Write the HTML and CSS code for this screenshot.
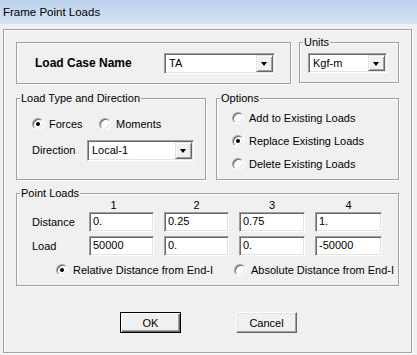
FILE: index.html
```html
<!DOCTYPE html>
<html>
<head>
    <meta charset="UTF-8">
    <title>Frame Point Loads</title>
    <link rel="stylesheet" href="styles.css">
</head>
<body>
    <div class="titlebar">Frame Point Loads</div>

    <div class="frame">
        <div class="row">
            <div class="group case-group">
                <span class="case-label">Load Case Name</span>
                <div class="combo combo-case">
                    <span class="combo-text">TA</span>
                    <span class="combo-btn"></span>
                </div>
            </div>
            <div class="group units-group">
                <span class="legend">Units</span>
                <div class="combo combo-units">
                    <span class="combo-text">Kgf-m</span>
                    <span class="combo-btn"></span>
                </div>
            </div>
        </div>

        <div class="row row-mid">
            <div class="group type-group">
                <span class="legend">Load Type and Direction</span>
                <div class="type-radios">
                    <label class="opt opt-forces"><span class="radio checked"></span>Forces</label>
                    <label class="opt"><span class="radio"></span>Moments</label>
                </div>
                <div class="dir-row">
                    <span class="dir-label">Direction</span>
                    <div class="combo combo-dir">
                        <span class="combo-text">Local-1</span>
                        <span class="combo-btn"></span>
                    </div>
                </div>
            </div>
            <div class="group options-group">
                <span class="legend">Options</span>
                <label class="opt opt-row"><span class="radio"></span>Add to Existing Loads</label>
                <label class="opt opt-row"><span class="radio checked"></span>Replace Existing Loads</label>
                <label class="opt opt-row"><span class="radio"></span>Delete Existing Loads</label>
            </div>
        </div>

        <div class="group points-group">
            <span class="legend">Point Loads</span>
            <div class="grid heads">
                <span></span>
                <span class="head head-first">1</span>
                <span class="head">2</span>
                <span class="head">3</span>
                <span class="head">4</span>
            </div>
            <div class="grid">
                <span class="row-label">Distance</span>
                <span class="field">0.</span>
                <span class="field">0.25</span>
                <span class="field">0.75</span>
                <span class="field">1.</span>
            </div>
            <div class="grid grid-load">
                <span class="row-label">Load</span>
                <span class="field">50000</span>
                <span class="field">0.</span>
                <span class="field">0.</span>
                <span class="field">-50000</span>
            </div>
            <div class="dist-row">
                <label class="opt opt-rel"><span class="radio checked"></span>Relative Distance from End-I</label>
                <label class="opt"><span class="radio"></span>Absolute Distance from End-I</label>
            </div>
        </div>

        <div class="buttons">
            <button class="btn btn-default">OK</button>
            <button class="btn">Cancel</button>
        </div>
    </div>
</body>
</html>
```

FILE: styles.css
```css
body {
    margin: 0;
    width: 417px;
    height: 355px;
    background: #f0f0f0;
    font-family: "Liberation Sans", Arial, sans-serif;
    font-size: 11px;
    color: #000;
    overflow: hidden;
}
.titlebar {
    height: 24px;
    line-height: 25px;
    padding-left: 3px;
    font-size: 11.5px;
    background: linear-gradient(#bcd2ec, #d3e2f3);
}
.frame {
    box-sizing: border-box;
    width: 409px;
    height: 324px;
    margin: 5px 0 0 3px;
    padding: 12px 0 0 12px;
    border: 1px solid #a0a0a0;
    box-shadow: inset 1px 1px #fff, 1px 1px #fff;
}
.row {
    display: flex;
    gap: 8px;
}
.row-mid {
    gap: 10px;
    margin-top: 14px;
}
.group {
    position: relative;
    box-sizing: border-box;
    border: 1px solid #a0a0a0;
    box-shadow: inset 1px 1px #fff, 1px 1px #fff;
}
.legend {
    position: absolute;
    top: -7px;
    left: 3px;
    padding: 0 1px;
    background: #f0f0f0;
    line-height: 13px;
}

/* load case */
.case-group {
    width: 275px;
    height: 42px;
    display: flex;
    align-items: center;
    padding-left: 18px;
}
.case-label {
    width: 129px;
    font-weight: bold;
    font-size: 12px;
}
.units-group {
    width: 100px;
    height: 41px;
    display: flex;
    align-items: center;
    padding-left: 8px;
}

/* combo boxes */
.combo {
    box-sizing: border-box;
    display: flex;
    height: 21px;
    padding: 1px;
    background: #fff;
    border: 1px solid;
    border-color: #a0a0a0 #fff #fff #a0a0a0;
    box-shadow: inset 1px 1px #696969, inset -1px -1px #e3e3e3;
}
.combo-case { width: 111px; }
.combo-units { width: 79px; height: 20px; }
.combo-dir { width: 107px; }
.combo-text {
    flex: 1;
    padding-left: 3px;
    line-height: 17px;
}
.combo-btn {
    box-sizing: border-box;
    width: 17px;
    position: relative;
    background: #f0f0f0;
    border: 1px solid;
    border-color: #e3e3e3 #696969 #696969 #e3e3e3;
    box-shadow: inset 1px 1px #fff, inset -1px -1px #a0a0a0;
}
.combo-btn::after {
    content: "";
    position: absolute;
    left: 4px;
    top: 6px;
    border-left: 3.5px solid transparent;
    border-right: 3.5px solid transparent;
    border-top: 4px solid #000;
}

/* radios */
.opt {
    display: flex;
    align-items: center;
    gap: 5px;
    white-space: nowrap;
}
.radio {
    box-sizing: border-box;
    width: 12px;
    height: 12px;
    flex: none;
    border-radius: 50%;
    background: #fff;
    border: 1px solid;
    border-color: #a0a0a0 #fff #fff #a0a0a0;
    box-shadow: inset 1px 1px #696969, inset -1px -1px #e3e3e3;
    position: relative;
}
.radio.checked::after {
    content: "";
    position: absolute;
    left: 3px;
    top: 3px;
    width: 4px;
    height: 4px;
    border-radius: 50%;
    background: #000;
}

/* load type */
.type-group {
    width: 190px;
    height: 82px;
    padding: 14px 0 0 15px;
}
.type-radios {
    display: flex;
    height: 22px;
}
.opt-forces { width: 67px; }
.dir-row {
    display: flex;
    align-items: center;
    height: 22px;
    margin-top: 4px;
}
.dir-label { width: 55px; }

/* options */
.options-group {
    width: 183px;
    height: 82px;
    padding: 7px 0 0 15px;
}
.opt-row { height: 23px; }

/* point loads */
.points-group {
    width: 383px;
    height: 93px;
    margin-top: 13px;
    padding: 5px 0 0 15px;
}
.grid {
    display: grid;
    grid-template-columns: 47px 65px 65px 66px 67px;
    column-gap: 10px;
    align-items: center;
}
.heads { height: 13px; }
.head {
    text-align: center;
    line-height: 13px;
}
.head-first { padding-right: 16px; }
.grid-load { margin-top: 4px; }
.field {
    box-sizing: border-box;
    height: 20px;
    padding-left: 3px;
    line-height: 17px;
    background: #fff;
    border: 1px solid;
    border-color: #a0a0a0 #fff #fff #a0a0a0;
    box-shadow: inset 1px 1px #696969, inset -1px -1px #e3e3e3;
}
.dist-row {
    display: flex;
    height: 22px;
    margin-top: 3px;
    padding-left: 24px;
}
.opt-rel { width: 178px; }

/* buttons */
.buttons {
    display: flex;
    gap: 55px;
    margin: 26px 0 0 104px;
}
.btn {
    box-sizing: border-box;
    width: 61px;
    height: 21px;
    padding: 0;
    font: inherit;
    color: #000;
    background: #f0f0f0;
    border: 1px solid;
    border-color: #fff #696969 #696969 #fff;
    box-shadow: inset -1px -1px #a0a0a0, inset 1px 1px #e3e3e3;
}
.btn-default {
    border: 1px solid #000;
    box-shadow: inset 1px 1px #fff, inset -1px -1px #696969, inset -2px -2px #a0a0a0;
}
```
